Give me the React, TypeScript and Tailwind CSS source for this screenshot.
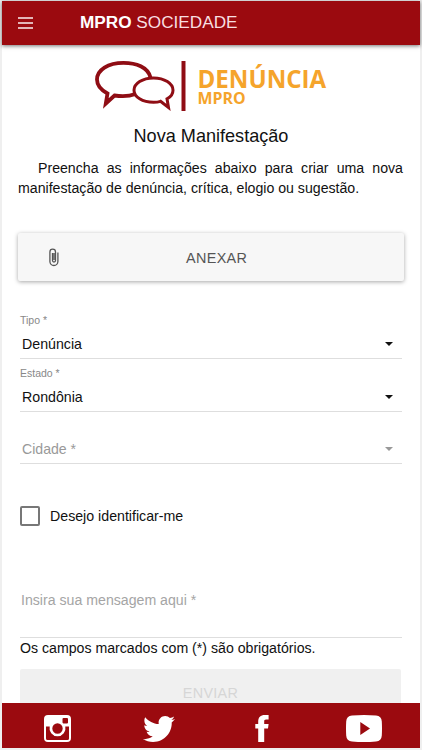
import { FaTwitter } from 'react-icons/fa';

export default function App() {
  return (
    <div className="flex h-[750px] w-[422px] flex-col overflow-hidden bg-[#efefef] pt-px pr-[2px] pb-[2px] pl-[2px] font-['Liberation_Sans',Arial,sans-serif] text-[#111]">
      {/* Toolbar */}
      <header className="z-10 flex h-[44px] shrink-0 items-center bg-[#9b0a0f] pl-4 text-white shadow-[0_1px_4px_rgba(0,0,0,0.55)]">
        <button className="-mt-px flex w-[15px] flex-col gap-[3px]" aria-label="Menu">
          <span className="h-[2px] bg-[#e3b5b7]" />
          <span className="h-[2px] bg-[#e3b5b7]" />
          <span className="h-[2px] bg-[#e3b5b7]" />
        </button>
        <h1 className="-mt-[2px] ml-[47px] text-[17.2px] leading-[20px] whitespace-nowrap text-[#f8dfe0]">
          <b className="text-white">MPRO</b> SOCIEDADE
        </h1>
      </header>

      <main className="min-h-0 flex-1 overflow-hidden bg-white">
        <Logo />
        <h2 className="mt-[15px] text-center text-[18.1px] leading-[22px]">Nova Manifestação</h2>
        <p className="mr-[17px] ml-4 mt-[11px] text-justify indent-5 text-[14.15px] leading-[20px]">
          Preencha as informações abaixo para criar uma nova manifestação de denúncia, crítica, elogio ou sugestão.
        </p>

        <button className="mt-[35px] ml-4 flex h-[48px] w-[386px] items-center rounded-[2px] bg-[#f7f7f7] text-[#555] shadow-[0_1px_4px_rgba(0,0,0,0.35)]">
          <PaperclipIcon />
          <span className="mt-[3px] ml-[127px] text-[14.4px] tracking-[0.35px]">ANEXAR</span>
        </button>

        <form className="mx-[18px] mt-[33px]">
          <SelectField label="Tipo *" value="Denúncia" />
          <SelectField label="Estado *" value="Rondônia" />
          <div className="flex h-[44px] items-end justify-between border-b border-[#dedede] pr-[9px] pb-[5px] pl-[2px] text-[#999]">
            <span className="text-[14.1px] leading-[18px]">Cidade *</span>
            <span className="pb-[6px]">
              <Caret />
            </span>
          </div>

          <label className="mt-[42px] flex items-center gap-[10px]">
            <span className="size-[20px] rounded-[2px] border-2 border-[#777]" />
            <span className="text-[14.2px] leading-[20px]">Desejo identificar-me</span>
          </label>

          <div className="mt-[64px] h-[48px] border-b border-[#dedede] pl-px text-[14.15px] leading-[20px] text-[#a5a5a5]">
            Insira sua mensagem aqui *
          </div>
          <p className="text-[14.15px] leading-[20px]">Os campos marcados com (*) são obrigatórios.</p>
          <button className="mt-[11px] h-[49px] w-[381px] rounded-[2px] bg-[#f0f0f0] text-[14.4px] tracking-[0.3px] text-[#d6d6d6]">
            ENVIAR
          </button>
        </form>
      </main>

      {/* Social links */}
      <footer className="z-10 flex h-[45px] shrink-0 items-center bg-[#9b0a0f] pt-[6px] pl-[42px] text-white">
        <InstagramIcon />
        <FaTwitter className="ml-[72px] h-[32px] w-[32px]" />
        <svg className="ml-[80px] h-[27px] w-[14px]" viewBox="0 0 14 27" fill="currentColor">
          <path d="M3.200 27V13.500H.3V9h2.900V6.500C3.200 2.300 5.500 0 9.800 0H13.600v4.600h-2.500C9.600 4.600 9.200 5.300 9.200 6.500V9h4.400L13 13.500H9.200V27Z" />
        </svg>
        <YoutubeIcon />
      </footer>
    </div>
  );
}

function Logo() {
  return (
    <div className="flex h-[65px] pt-[15px] pl-[93px]">
      <svg className="h-[51px] w-[94px] shrink-0" viewBox="0 0 94 51" fill="none" stroke="#8f0d14">
        <path
          d="M55.500 17.500C53 7 41 2.800 28.500 2.800 13 2.800 2 10 2 19.500c0 6 4 10.500 10.500 14L10.800 43.500 19.500 35.500C26 36.500 34 36.500 40.500 34"
          strokeWidth="3.800"
        />
        <path
          d="M58.500 18c-11 0-19.500 5.500-19.500 12.200S47.500 42.300 58.500 42.300c3 0 5-.3 7-1l8 6.200-1.500-8.700c4-2 6-5 6-8.600C78 23.500 69.500 18 58.500 18Z"
          strokeWidth="3"
        />
        <path d="M88.500 1v50" strokeWidth="4" />
      </svg>
      <div className="ml-[8.5px] pt-[8px] font-['Open_Sans','Noto_Sans',sans-serif] font-bold text-[#f5a42b]">
        <div className="text-[24.1px] leading-[22px]">DENÚNCIA</div>
        <div className="text-[15.9px] leading-[16px]">MPRO</div>
      </div>
    </div>
  );
}

function SelectField({ label, value }: { label: string; value: string }) {
  return (
    <div className="mb-[8px] h-[45px] border-b border-[#dedede]">
      <div className="text-[10.5px] leading-[12px] text-[#888]">{label}</div>
      <div className="mt-[6px] flex h-[24px] items-center justify-between pr-[9px] pl-[2px]">
        <span className="text-[14.2px] leading-[20px]">{value}</span>
        <Caret />
      </div>
    </div>
  );
}

function Caret() {
  return <span className="mb-px block border-x-[4px] border-t-[4px] border-x-transparent border-t-current" />;
}

function PaperclipIcon() {
  return (
    <svg className="ml-[31px] h-[20px] w-[10px]" viewBox="0 0 10 20" fill="none" stroke="currentColor" strokeWidth="1.3">
      <path d="M6.500 5v8.500a1.500 1.500 0 0 1-3 0V6M6.500 5a2.800 2.800 0 0 0-5.600 0v9.500a4 4 0 0 0 8 0V5.500M5 6v7" />
    </svg>
  );
}

function InstagramIcon() {
  return (
    <svg className="h-[27px] w-[27px]" viewBox="0 0 27 27" fill="currentColor">
      <path
        fillRule="evenodd"
        d="M4 0h19a4 4 0 0 1 4 4v19a4 4 0 0 1-4 4H4a4 4 0 0 1-4-4V4a4 4 0 0 1 4-4Zm15.500 3a1 1 0 0 0-1 1v3.500a1 1 0 0 0 1 1H23a1 1 0 0 0 1-1V4a1 1 0 0 0-1-1ZM2 11.500V23.500A1.500 1.500 0 0 0 3.500 25h20a1.500 1.500 0 0 0 1.500-1.500V11.500h-3.700a8 8 0 1 1-15.600 0Z"
      />
      <circle cx="13.5" cy="13.5" r="6.300" fill="#9b0a0f" stroke="currentColor" strokeWidth="2.200" />
    </svg>
  );
}

function YoutubeIcon() {
  return (
    <svg className="ml-[77px] h-[27px] w-[36px]" viewBox="0 0 36 27" fill="currentColor">
      <path fillRule="evenodd" d="M6 .5Q18-.5 30 .5q5.500.5 5.800 6 .4 7 0 14-.3 5.500-5.800 6-12 1-24 0-5.500-.5-5.800-6-.4-7 0-14Q.5 1 6 .5ZM14.300 7v13l9.700-6.500Z" />
    </svg>
  );
}
